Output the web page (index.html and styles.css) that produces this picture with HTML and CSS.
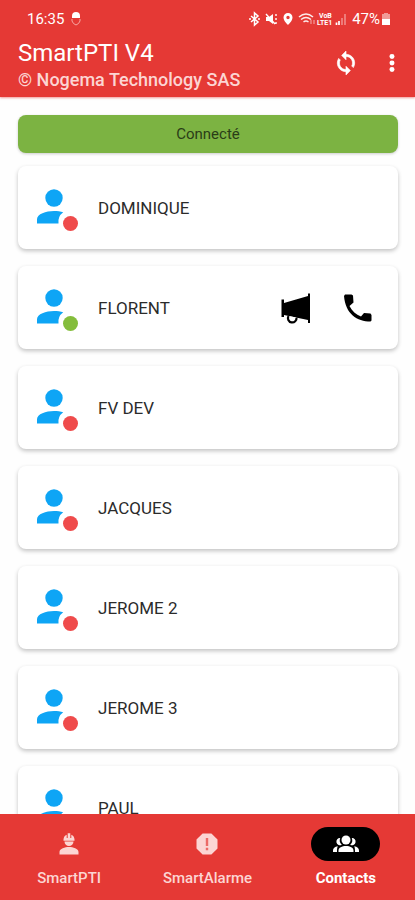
FILE: index.html
```html
<!DOCTYPE html>
<html lang="fr">
<head>
<meta charset="utf-8">
<meta name="viewport" content="width=device-width, initial-scale=1">
<title>SmartPTI V4</title>
<link rel="stylesheet" href="styles.css">
</head>
<body>
<svg class="defs" aria-hidden="true">
  <symbol id="person" viewBox="0 0 46 46">
    <circle cx="20" cy="13" r="8.700"/>
    <path d="M3 38.500v-4.200C3 29 12 26 20 26c3.400 0 6.500.500 9.200 1.300A12 12 0 0 0 24.500 38.500z"/>
  </symbol>
</svg>
<header class="top">
  <div class="status">
    <span class="clock">16:35</span>
    <svg class="glyph" viewBox="0 0 12 14" width="12" height="14"><path d="M2 6V4a4 4 0 0 1 8 0v2z" fill="#fff"/><path d="M2 7v2q1 3 4 4 3-1 4-4V7" fill="none" stroke="#f7a6a2" stroke-width="1"/></svg>
    <svg class="tray" viewBox="0 0 100 16" width="100" height="16" fill="none" stroke="#fff">
      <path d="M3 5l7 6-3.500 3V2L10 5l-7 6M1 8h2M10 8h2" stroke-width="1.500"/>
      <path d="M18 6h3l4-3v10l-4-3h-3z" fill="#fff" stroke="none"/><path d="M18 3l9 10M28 3v2M28 7v2M28 11v2" stroke-width="1.400"/>
      <path d="M40 2a4.500 4.500 0 0 0-4.500 4.500C35.500 10 40 14 40 14s4.500-4 4.500-7.500A4.500 4.500 0 0 0 40 2zm0 2.800a1.700 1.700 0 1 1 0 3.400A1.700 1.700 0 0 1 40 4.800z" fill="#fff" fill-rule="evenodd" stroke="none"/>
      <path d="M51 6q7-6 14 0M53 8.500q5-4 10 0M55.500 11q2.500-2 5 0" stroke-width="1.500" opacity=".9"/><path d="M63 9v4M66 9v4" stroke-width="1.200" opacity=".5"/>
      <text class="carrier" x="71" y="7">VoB</text>
      <text class="carrier" x="69" y="14">LTE1</text>
      <path d="M88.500 14v-2.500M91 14v-4" stroke-width="1.700"/>
      <path d="M94 14V7M97 14V3" stroke-width="1.700" opacity=".4"/>
    </svg>
    <span class="charge">47%</span>
    <svg class="battery" viewBox="0 0 10 14" width="10" height="14"><path d="M3 1h4v1h2v5H1V2h2z" fill="#f19b98"/><path d="M1 7h8v6H1z" fill="#fff"/></svg>
  </div>
  <div class="bar">
    <div class="titles">
      <h1>SmartPTI V4</h1>
      <p>© Nogema Technology SAS</p>
    </div>
    <button class="tool" aria-label="Synchroniser"><svg viewBox="0 0 24 24" width="26" height="26" fill="#fff" stroke="#fff" stroke-width=".6"><path d="M12 4V1L8 5l4 4V6c3.310 0 6 2.690 6 6 0 1.010-.25 1.970-.7 2.800l1.460 1.460A7.930 7.930 0 0 0 20 12c0-4.420-3.580-8-8-8zm0 14c-3.310 0-6-2.690-6-6 0-1.010.25-1.970.7-2.800L5.240 7.740A7.930 7.930 0 0 0 4 12c0 4.420 3.580 8 8 8v3l4-4-4-4z"/></svg></button>
    <button class="tool" aria-label="Menu"><svg viewBox="0 0 24 24" width="26" height="26" fill="#fff"><circle cx="12" cy="6" r="2.300"/><circle cx="12" cy="12" r="2.300"/><circle cx="12" cy="18" r="2.300"/></svg></button>
  </div>
</header>
<main>
  <div class="banner" role="status">Connecté</div>
  <ul class="contacts">
    <li class="card"><span class="avatar"><svg><use href="#person"/></svg><i class="dot"></i></span><span class="name">DOMINIQUE</span></li>
    <li class="card"><span class="avatar"><svg><use href="#person"/></svg><i class="dot online"></i></span><span class="name">FLORENT</span>
      <button class="action" aria-label="Annonce"><svg viewBox="0 0 36 36" width="36" height="36"><path d="M3.500 9.500H6V13L30 6V3.500h2v29.500h-2v-3L6 25v2H3.500z" fill="#000"/><path d="M10.500 26a4.300 4.300 0 1 0 8 1.500" fill="#fff" stroke="#000" stroke-width="2.200"/></svg></button>
      <button class="action" aria-label="Appeler"><svg viewBox="0 0 36 36" width="36" height="36"><path d="M6 4.500h6.500l1.500 1 .5 7-4 3.500c2.500 5 6.500 8.500 11.500 10.500l3-3.500 6.500.5 1 1.500v5.500l-1 1C18 31.500 6.500 24 5 6z" fill="#000"/></svg></button>
    </li>
    <li class="card"><span class="avatar"><svg><use href="#person"/></svg><i class="dot"></i></span><span class="name">FV DEV</span></li>
    <li class="card"><span class="avatar"><svg><use href="#person"/></svg><i class="dot"></i></span><span class="name">JACQUES</span></li>
    <li class="card"><span class="avatar"><svg><use href="#person"/></svg><i class="dot"></i></span><span class="name">JEROME 2</span></li>
    <li class="card"><span class="avatar"><svg><use href="#person"/></svg><i class="dot"></i></span><span class="name">JEROME 3</span></li>
    <li class="card"><span class="avatar"><svg><use href="#person"/></svg><i class="dot"></i></span><span class="name">PAUL</span></li>
  </ul>
</main>
<nav class="tabs">
  <a href="#pti" class="tab"><span class="pill"><svg viewBox="0 0 24 24" width="24" height="24"><path d="M6.500 7.500a5.500 5.500 0 0 1 3.200-4.700V6h1V1.200h2.600V6h1V2.800a5.500 5.500 0 0 1 3.200 4.700v1.300h-11zM7.500 9.500h9a4.500 4.500 0 0 1-9 0zM2.500 22.500V20c0-3.500 5.500-5 9.500-5s9.500 1.500 9.500 5v2.500z"/></svg></span>SmartPTI</a>
  <a href="#alarme" class="tab"><span class="pill"><svg viewBox="0 0 24 24" width="24" height="24"><path d="M7.600 1.500h8.800l6.100 6.100v8.800l-6.100 6.100H7.600l-6.100-6.100V7.600z"/><path d="M10.800 6h2.400v8h-2.400zM10.800 15.800h2.400v2.400h-2.400z" fill="#ec6a66"/></svg></span>SmartAlarme</a>
  <a href="#contacts" class="tab active" aria-current="page"><span class="pill"><svg viewBox="0 0 28 20" width="28" height="20"><circle cx="14" cy="6" r="4.500"/><path d="M6.500 18v-1.500C6.500 13.500 10 12 14 12s7.500 1.500 7.500 4.500V18zM1 18v-1.500c0-2.500 1.700-3.800 4.800-4.300C5 13.500 5 16 5 18zM27 18v-1.500c0-2.500-1.700-3.800-4.800-4.300.8 1.300.8 3.800.8 5.800zM8.200 4a6 6 0 0 0 1.600 6.700A3.600 3.600 0 1 1 8.200 4zM19.800 4a6 6 0 0 1-1.600 6.700A3.600 3.600 0 1 0 19.800 4z"/></svg></span>Contacts</a>
</nav>
</body>
</html>
```
FILE: styles.css
```css
* { box-sizing: border-box; }

body {
  margin: 0;
  height: 100vh;
  display: flex;
  flex-direction: column;
  overflow: hidden;
  background: #fefefe;
  color: #2b2b2b;
  font-family: Roboto, "Liberation Sans", sans-serif;
}

.defs { display: none; }

button {
  display: flex;
  padding: 0;
  border: 0;
  background: none;
}

.top {
  flex: none;
  padding: 10px 10px 5px 18px;
  background: #e53935;
  color: #fff;
  box-shadow: 0 1px 2px rgba(229, 57, 53, 0.5);
}

.status {
  display: flex;
  align-items: center;
  height: 18px;
  padding: 0 14px 0 9px;
  font-size: 15px;
  line-height: 18px;
}

.glyph { margin-left: 6px; }
.tray { margin-left: auto; }
.charge { margin-left: 4px; font-size: 15px; }
.battery { margin-left: 1px; }

.carrier {
  fill: #fff;
  stroke: none;
  font-size: 7px;
  font-weight: 700;
}

.bar {
  display: flex;
  align-items: flex-start;
  gap: 20px;
  padding-top: 10px;
}

.titles { flex: 1; }
.tool { margin-top: 12px; }

h1 {
  margin: 0;
  font-size: 24px;
  font-weight: 400;
  line-height: 30px;
}

.titles p {
  margin: 0;
  color: #fcd5d3;
  font-size: 18px;
  font-weight: 500;
  line-height: 24px;
}

main {
  flex: 1;
  min-height: 0;
  overflow: hidden;
  padding: 18px 17px 0 18px;
}

.banner {
  border-radius: 8px;
  background: #7cb342;
  box-shadow: 0 1px 3px rgba(0, 0, 0, 0.2);
  color: #2a3d17;
  font-size: 15px;
  line-height: 38px;
  text-align: center;
}

.contacts {
  display: flex;
  flex-direction: column;
  gap: 17px;
  margin: 13px 0 0;
  padding: 0;
  list-style: none;
}

.card {
  display: flex;
  align-items: center;
  height: 83px;
  padding: 0 23px 0 16px;
  border-radius: 8px;
  background: #fff;
  box-shadow: 0 2px 4px rgba(0, 0, 0, 0.24);
}

.avatar {
  position: relative;
  width: 46px;
  height: 46px;
  margin-right: 18px;
}

.avatar svg {
  display: block;
  width: 46px;
  height: 46px;
  fill: #0ea5f5;
}

.dot {
  position: absolute;
  right: 2px;
  bottom: 0;
  width: 15px;
  height: 15px;
  border-radius: 50%;
  background: #ef4b4b;
}

.dot.online { background: #84bd3c; }

.name {
  flex: 1;
  font-size: 17px;
  line-height: 24px;
}

.action + .action { margin-left: 25px; }

.tabs {
  flex: none;
  display: flex;
  padding: 13px 0 12px;
  background: #e53935;
}

.tab {
  flex: 1;
  display: flex;
  flex-direction: column;
  align-items: center;
  gap: 7px;
  color: #fcd5d3;
  font-size: 15px;
  font-weight: 500;
  line-height: 20px;
  text-decoration: none;
}

.pill {
  display: flex;
  align-items: center;
  justify-content: center;
  width: 69px;
  height: 34px;
  border-radius: 17px;
}

.pill svg { fill: currentColor; }

.active {
  color: #fff;
  font-weight: 700;
}

.active .pill { background: #000; }
```
